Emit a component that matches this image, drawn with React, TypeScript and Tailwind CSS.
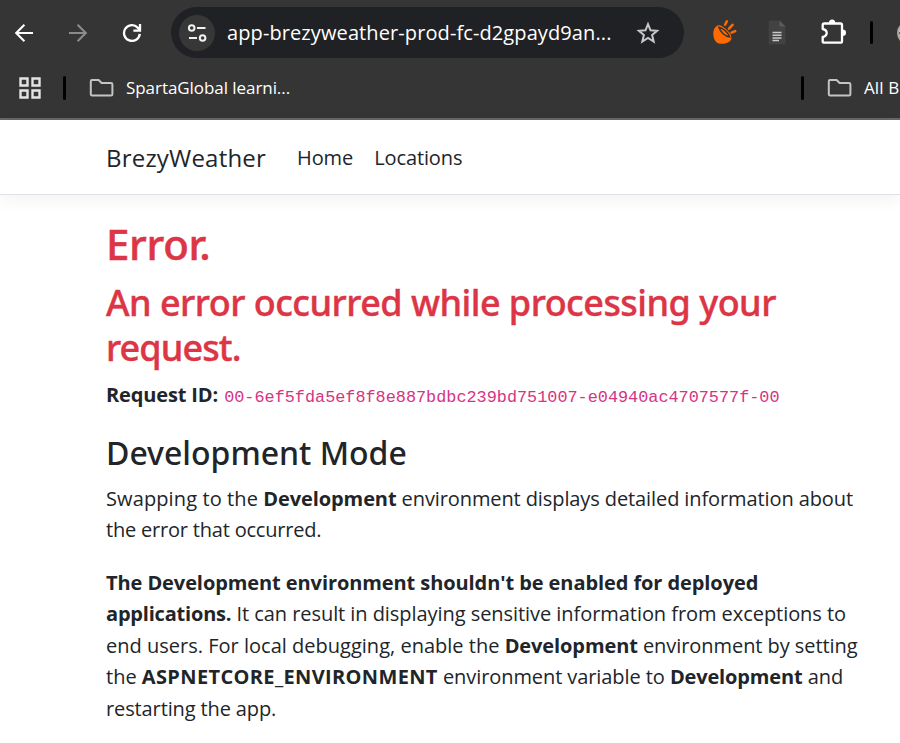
import type { ReactNode } from "react";

function Folder({ className }: { className?: string }) {
  return (
    <svg className={className} width="26" height="20" viewBox="0 0 26 20" fill="none" stroke="#c4c4c4" strokeWidth="2" strokeLinejoin="round">
      <path d="M3 2h6.6l3 3H22a1.4 1.4 0 0 1 1.4 1.4v9.8A1.4 1.4 0 0 1 22 17.6H3.2a1.4 1.4 0 0 1-1.4-1.4V3.2A1.2 1.2 0 0 1 3 2Z" />
    </svg>
  );
}

function Toolbar() {
  return (
    <div className="flex h-[65px] w-[900px] items-center overflow-hidden">
      <svg className="ml-[14px] shrink-0" width="20" height="20" viewBox="0 0 20 20" fill="none" stroke="#fff" strokeWidth="2.1">
        <path d="M19 10H2.5M10.4 1.8 2.2 10l8.2 8.2" />
      </svg>
      <svg className="ml-[34px] shrink-0" width="20" height="20" viewBox="0 0 20 20" fill="none" stroke="#8b8b8b" strokeWidth="2.1">
        <path d="M1 10h16.5M9.6 1.8l8.2 8.2-8.2 8.2" />
      </svg>
      <svg className="ml-[34px] shrink-0" width="20" height="20" viewBox="0 0 20 20" fill="none" stroke="#fff" strokeWidth="2.3">
        <path d="M17.8 10.8a7.9 7.9 0 1 1-2.1-6.2l2.5 2.6M18 1v6.6h-6.6" />
      </svg>
      <div className="ml-[29px] flex h-[51px] w-[513px] shrink-0 items-center rounded-full bg-[#202124]">
        <div className="ml-[8px] flex h-9 w-9 items-center justify-center rounded-full bg-[#373737]">
          <svg width="20" height="20" viewBox="0 0 20 20" fill="none" stroke="#f1f1f1" strokeWidth="2">
            <circle cx="4.7" cy="5" r="2.8" />
            <path d="M10 5h8.5M2 15h8" />
            <circle cx="15.6" cy="15" r="2.8" />
          </svg>
        </div>
        <span className="ml-3 w-[400px] whitespace-nowrap text-[20px] leading-[30px] tracking-[0.1px] text-white">app-brezyweather-prod-fc-d2gpayd9an...</span>
        <svg className="ml-[9px] shrink-0" width="24" height="24" viewBox="0 0 24 24" fill="none" stroke="#c7c7c7" strokeWidth="2">
          <path d="m12 3.200 2.500 6.100 6.600.5-5 4.300 1.600 6.400-5.700-3.500-5.700 3.500 1.600-6.400-5-4.300 6.600-.5Z" />
        </svg>
      </div>
      <svg className="ml-[28px] shrink-0" width="26" height="26" viewBox="0 0 26 26">
        <path d="M6.300 5.300C3 6.300 1 10 1.400 14.800c.3 5 2.600 8.600 7 9 5.400.4 9.900-1.700 10.900-4.700.800-3.300-1.500-6.900-5.500-10.200-2.800-2.300-5.300-4.300-7.500-3.600Z" fill="#ff6a00" />
        <path d="M7 7.200c3.900.7 9.200 5 10.700 9.800-4.800-.5-9.200-4.800-10.700-9.800Z" fill="none" stroke="#373737" strokeWidth="1.500" />
        <path d="m13.100 4.800 1.700-3.400M17 8.700l3.500-3.900M19.600 12.700l3.600-1.600" stroke="#ff6a00" strokeWidth="2.500" strokeLinecap="round" />
      </svg>
      <svg className="ml-[30px] shrink-0" width="18" height="25" viewBox="0 0 18 25">
        <path d="M2 .5h9.500l6 6v16.700a1.300 1.300 0 0 1-1.300 1.300H2A1.300 1.300 0 0 1 .7 23.200V1.800A1.300 1.300 0 0 1 2 .5Z" fill="#424242" />
        <path d="m11.500.5 6 6h-6Z" fill="#5b5b5b" />
        <path d="M4.500 12.500h9M4.500 15.300h9M4.500 18.100h9M4.500 20.400h6.500" stroke="#c9c9c9" strokeWidth="1.500" />
      </svg>
      <svg className="ml-[34px] shrink-0" width="27" height="27" viewBox="0 0 27 27">
        <path d="M4.200 4.500h16.300a1.500 1.500 0 0 1 1.500 1.500v16.200a1.500 1.500 0 0 1-1.500 1.500H4.200a1.500 1.500 0 0 1-1.500-1.500V18c2.500-.5 4-2 4-4s-1.500-3.500-4-4V6a1.500 1.500 0 0 1 1.500-1.500Z" fill="none" stroke="#fff" strokeWidth="2.300" strokeLinejoin="round" />
        <path d="M8.900 4a3.200 3.600 0 0 1 6.400 0ZM22.500 10.500a3.500 3.300 0 0 1 0 6.600Z" fill="#fff" />
      </svg>
      <div className="ml-[23px] h-[23px] w-[3px] shrink-0 rounded-full bg-black" />
      <div className="ml-[24px] h-[24px] w-[24px] shrink-0 rounded-full border-2 border-[#aaa79c] bg-[linear-gradient(#c9c6ba_45%,#76502c_46%,#76502c_54%,#b9b6ac_55%)]" />
    </div>
  );
}

function Bookmarks() {
  return (
    <div className="flex h-[53px] w-[900px] items-center overflow-hidden pb-[7px] text-[17px] leading-6 whitespace-nowrap text-white">
      <svg className="ml-[19px] shrink-0" width="22" height="22" viewBox="0 0 22 22" fill="none" stroke="#e4e4e4" strokeWidth="2.400">
        <path d="M1.500 1.500h7v7h-7zM13.500 1.500h7v7h-7zM1.500 13.500h7v7h-7zM13.500 13.500h7v7h-7z" />
      </svg>
      <div className="ml-[22px] h-6 w-[3px] shrink-0 rounded-full bg-black" />
      <Folder className="ml-[23px] shrink-0" />
      <span className="ml-[11px] w-[170px] shrink-0 tracking-[-0.060px]">SpartaGlobal learni...</span>
      <div className="ml-[505px] h-6 w-[3px] shrink-0 rounded-full bg-black" />
      <Folder className="ml-[23px] shrink-0" />
      <span className="ml-[11px] tracking-[0.100px]">All B</span>
    </div>
  );
}

function B({ children, className = "tracking-[-0.150px]" }: { children: ReactNode; className?: string }) {
  return <strong className={`font-bold ${className}`}>{children}</strong>;
}

export default function App() {
  return (
    <div className="h-[743px] w-[900px] overflow-hidden bg-white font-['Open_Sans','Noto_Sans',sans-serif] text-[#212529]">
      <div className="h-[120px] border-b-2 border-[#676767] bg-[#353535]">
        <Toolbar />
        <Bookmarks />
      </div>
      <header className="flex h-[75px] items-center border-b border-[#dee2e6] pl-[106px] shadow-[0_5px_16px_rgba(0,0,0,0.050)]">
        <a className="pt-px text-[24px] leading-9 tracking-[0.200px]">BrezyWeather</a>
        <nav className="flex pt-[2px] text-[20px] leading-8 tracking-[-0.100px]">
          <a className="ml-[31px]">Home</a>
          <a className="ml-[21px]">Locations</a>
        </nav>
      </header>
      <main className="pt-6 pl-[106px] whitespace-nowrap">
        <h1 className="font-['Noto_Sans'] text-[42px] leading-[50px] font-medium tracking-[-0.300px] text-[#dc3545] [-webkit-text-stroke:0.5px_#dc3545]">Error.</h1>
        <h2 className="mt-[12px] font-['Noto_Sans'] text-[36px] leading-[44.500px] font-medium tracking-[-0.530px] text-[#dc3545] [-webkit-text-stroke:0.4px_#dc3545]">
          An error occurred while processing your
          <br />
          <span className="tracking-[-0.900px]">request.</span>
        </h2>
        <p className="mt-[8.500px] h-[31.500px] text-[20px] leading-[31.500px]">
          <B>Request ID:</B>{" "}
          <code className="ml-px font-['Liberation_Mono',monospace] text-[16.830px] text-[#d63384]">00-6ef5fda5ef8f8e887bdbc239bd751007-e04940ac4707577f-00</code>
        </p>
        <h3 className="mt-[23px] font-['Noto_Sans'] text-[32px] leading-[39px] font-medium">Development Mode</h3>
        <p className="mt-[10.500px] text-[20px] leading-[31.500px]">
          <span className="tracking-[0.110px]">Swapping to the </span>
          <B className="tracking-[-0.100px]">Development</B>
          <span className="tracking-[-0.100px]"> environment displays detailed information about</span>
          <br />
          <span className="tracking-[-0.200px]">the error that occurred.</span>
        </p>
        <p className="mt-[21px] text-[20px] leading-[31.500px]">
          <B className="tracking-[-0.085px]">The Development environment shouldn't be enabled for deployed</B>
          <br />
          <B className="tracking-[-0.200px]">applications.</B>
          <span className="tracking-[-0.055px]"> It can result in displaying sensitive information from exceptions to</span>
          <br />
          <span className="tracking-[0.010px]">end users. For local debugging, enable the </span>
          <B className="tracking-[-0.100px]">Development</B>
          <span className="tracking-[-0.060px]"> environment by setting</span>
          <br />
          <span>the </span>
          <B className="tracking-[0.360px]">ASPNETCORE_ENVIRONMENT</B>
          <span className="tracking-[-0.080px]"> environment variable to </span>
          <B>Development</B>
          <span> and</span>
          <br />
          <span className="tracking-[-0.120px]">restarting the app.</span>
        </p>
      </main>
    </div>
  );
}
